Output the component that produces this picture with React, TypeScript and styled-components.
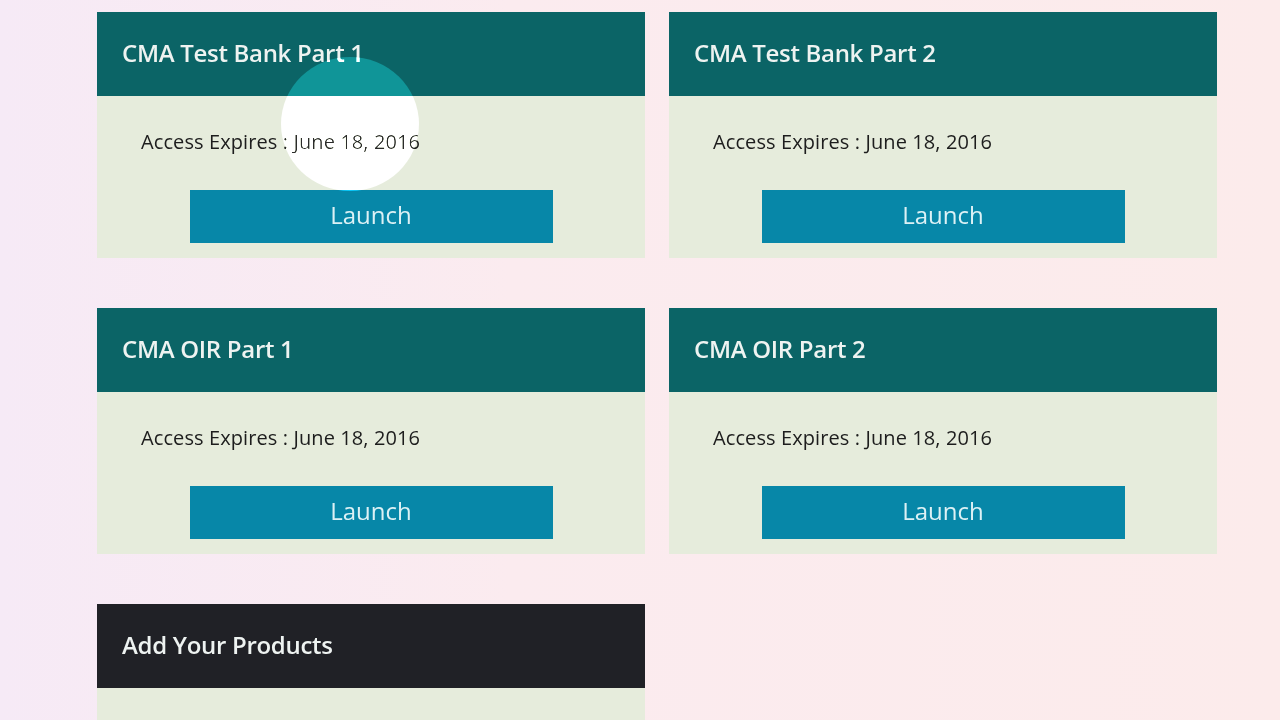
import styled, { createGlobalStyle } from "styled-components";

const GlobalStyle = createGlobalStyle`
    html, body {
        margin: 0;
        padding: 0;
        height: 100%;
        overflow: hidden;
    }
    body {
        background: linear-gradient(to right, #f6eaf6 0%, #fbebef 40%, #fcebeb 100%);
        font-family: "Open Sans", "DejaVu Sans", sans-serif;
    }
`;

const Page = styled.div`
    position: relative;
    padding: 12px 0 0 97px;
    min-height: 720px;
    box-sizing: border-box;
`;

const Grid = styled.div`
    display: grid;
    grid-template-columns: 548px 548px;
    column-gap: 24px;
    row-gap: 50px;
`;

const Card = styled.div`
    display: flex;
    flex-direction: column;
`;

const CardHeader = styled.div<{ $dark?: boolean }>`
    height: 84px;
    display: flex;
    align-items: center;
    padding: 0 25px 3px 25px;
    box-sizing: border-box;
    background-color: ${(props) => (props.$dark ? "#202126" : "#0b6466")};
    color: #eef3f1;
    font-size: 24px;
    font-weight: 600;
    letter-spacing: -0.3px;
`;

const CardBody = styled.div`
    background-color: #e6ecdc;
    padding: 32px 0 15px 0;
    display: flex;
    flex-direction: column;
    align-items: center;
    min-height: 60px;
`;

const Expires = styled.div`
    align-self: stretch;
    padding-left: 44px;
    font-size: 20px;
    line-height: 28px;
    color: #1d1d1d;
    letter-spacing: 0.1px;
`;

const LaunchBtn = styled.button`
    margin-top: 34px;
    width: 363px;
    height: 53px;
    padding: 0 0 4px 0;
    border: 0;
    background-color: #0787a8;
    color: #dcf1f5;
    font-family: "Open Sans", "DejaVu Sans", sans-serif;
    font-size: 24px;
    cursor: pointer;
`;

const ClickMark = styled.div`
    position: absolute;
    left: 281px;
    top: 57px;
    width: 138px;
    height: 134px;
    border-radius: 50%;
    background: radial-gradient(circle, rgb(84, 84, 84) 0%, rgb(84, 84, 84) 88%, rgba(84, 84, 84, 0) 100%);
    mix-blend-mode: color-dodge;
    pointer-events: none;
`;

interface IProduct {
    id: string;
    title: string;
    expires: string;
}

const products: IProduct[] = [
    { id: "tb1", title: "CMA Test Bank Part 1", expires: "June 18, 2016" },
    { id: "tb2", title: "CMA Test Bank Part 2", expires: "June 18, 2016" },
    { id: "oir1", title: "CMA OIR Part 1", expires: "June 18, 2016" },
    { id: "oir2", title: "CMA OIR Part 2", expires: "June 18, 2016" },
];

const App = () => {
    return (
        <>
            <GlobalStyle />
            <Page>
                <Grid>
                    {products.map((p) => (
                        <Card key={p.id}>
                            <CardHeader>{p.title}</CardHeader>
                            <CardBody>
                                <Expires>Access Expires : {p.expires}</Expires>
                                <LaunchBtn>Launch</LaunchBtn>
                            </CardBody>
                        </Card>
                    ))}
                    <Card>
                        <CardHeader $dark>Add Your Products</CardHeader>
                        <CardBody />
                    </Card>
                </Grid>
                <ClickMark />
            </Page>
        </>
    );
};

export default App;
